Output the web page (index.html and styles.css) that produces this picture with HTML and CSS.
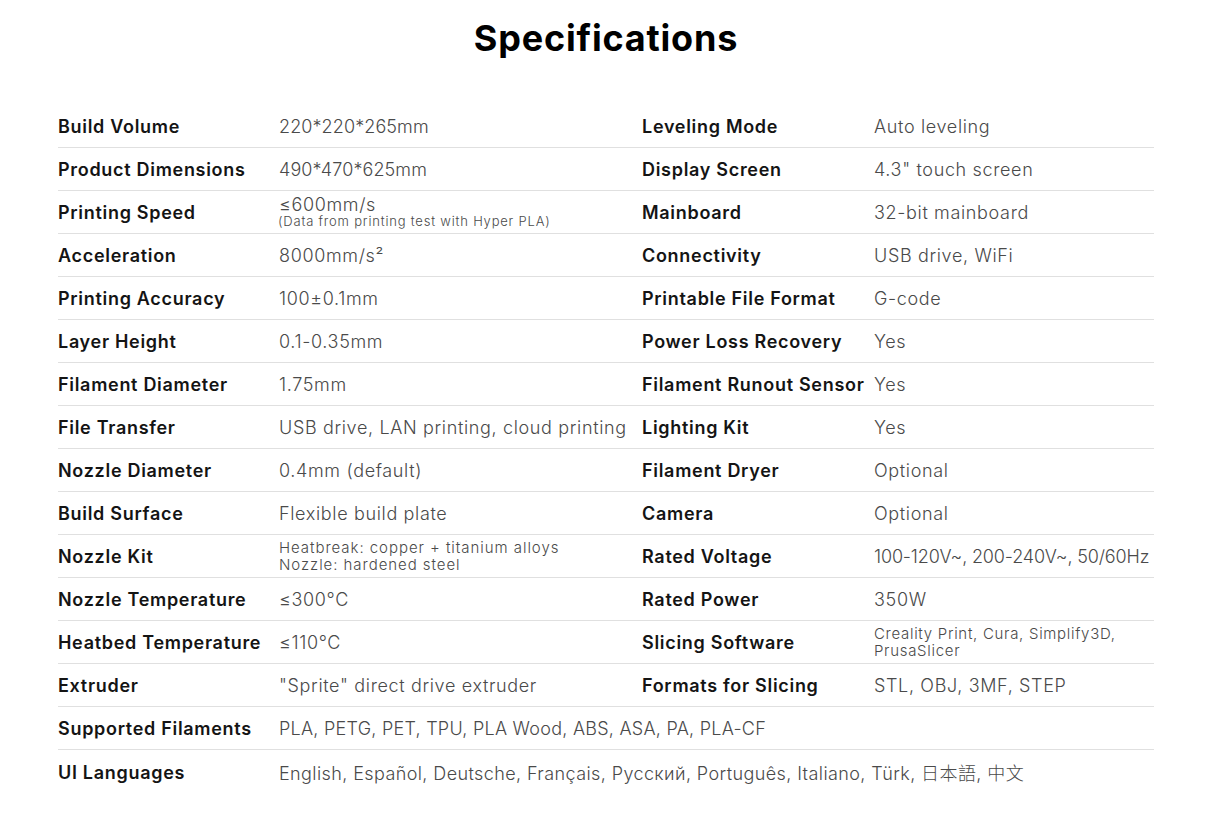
FILE: index.html
```html
<!DOCTYPE html>
<html lang="en">
<head>
<meta charset="utf-8">
<title>Specifications</title>
<link rel="stylesheet" href="styles.css">
</head>
<body>
<main class="specs">
  <h1 class="title">Specifications</h1>
  <div class="grid">
    <div class="cell label">Build Volume</div><div class="cell value num">220*220*265mm</div>
    <div class="cell label">Leveling Mode</div><div class="cell value">Auto leveling</div>

    <div class="cell label">Product Dimensions</div><div class="cell value num">490*470*625mm</div>
    <div class="cell label">Display Screen</div><div class="cell value">4.3" touch screen</div>

    <div class="cell label">Printing Speed</div><div class="cell value stack"><span class="main">≤600mm/s</span><span class="note">(Data from printing test with Hyper PLA)</span></div>
    <div class="cell label">Mainboard</div><div class="cell value">32-bit mainboard</div>

    <div class="cell label">Acceleration</div><div class="cell value">8000mm/s²</div>
    <div class="cell label">Connectivity</div><div class="cell value">USB drive, WiFi</div>

    <div class="cell label">Printing Accuracy</div><div class="cell value">100±0.1mm</div>
    <div class="cell label">Printable File Format</div><div class="cell value">G-code</div>

    <div class="cell label">Layer Height</div><div class="cell value">0.1-0.35mm</div>
    <div class="cell label">Power Loss Recovery</div><div class="cell value">Yes</div>

    <div class="cell label">Filament Diameter</div><div class="cell value">1.75mm</div>
    <div class="cell label">Filament Runout Sensor</div><div class="cell value">Yes</div>

    <div class="cell label">File Transfer</div><div class="cell value">USB drive, LAN printing, cloud printing</div>
    <div class="cell label">Lighting Kit</div><div class="cell value">Yes</div>

    <div class="cell label">Nozzle Diameter</div><div class="cell value">0.4mm (default)</div>
    <div class="cell label">Filament Dryer</div><div class="cell value">Optional</div>

    <div class="cell label">Build Surface</div><div class="cell value">Flexible build plate</div>
    <div class="cell label">Camera</div><div class="cell value">Optional</div>

    <div class="cell label">Nozzle Kit</div><div class="cell value kit">Heatbreak: copper + titanium alloys<br>Nozzle: hardened steel</div>
    <div class="cell label">Rated Voltage</div><div class="cell value voltage">100-120V~, 200-240V~, 50/60Hz</div>

    <div class="cell label">Nozzle Temperature</div><div class="cell value">≤300°C</div>
    <div class="cell label">Rated Power</div><div class="cell value">350W</div>

    <div class="cell label">Heatbed Temperature</div><div class="cell value">≤110°C</div>
    <div class="cell label">Slicing Software</div><div class="cell value slicer">Creality Print, Cura, Simplify3D,<br>PrusaSlicer</div>

    <div class="cell label">Extruder</div><div class="cell value">"Sprite" direct drive extruder</div>
    <div class="cell label">Formats for Slicing</div><div class="cell value">STL, OBJ, 3MF, STEP</div>

    <div class="cell label">Supported Filaments</div><div class="cell value wide filaments">PLA, PETG, PET, TPU, PLA Wood, ABS, ASA, PA, PLA-CF</div>

    <div class="cell label last">UI Languages</div><div class="cell value wide languages last">English, Español, Deutsche, Français, Русский, Português, Italiano, Türk, 日本語, 中文</div>
  </div>
</main>
</body>
</html>
```

FILE: styles.css
```css
html, body {
  margin: 0;
  padding: 0;
  background: #ffffff;
}

body {
  font-family: "Inter", "Open Sans", "Noto Sans CJK SC", sans-serif;
  color: #111111;
}

.specs {
  width: 1096px;
  margin-left: 58px;
}

.title {
  margin: 0 0 45px 0;
  padding-top: 16px;
  height: 44px;
  line-height: 44px;
  font-size: 36px;
  font-weight: 700;
  letter-spacing: 0.8px;
  text-align: center;
  color: #000000;
}

.grid {
  display: grid;
  grid-template-columns: 221px 363px 232px 280px;
}

.cell {
  border-bottom: 1px solid #e0e0e0;
  display: flex;
  align-items: center;
  box-sizing: border-box;
  height: 43px;
  white-space: nowrap;
}

.cell.last {
  border-bottom: none;
}

.label {
  font-size: 18px;
  font-weight: 600;
  letter-spacing: 0.7px;
  color: #141414;
  padding-top: 1px;
}

.value {
  font-size: 18px;
  font-weight: 300;
  letter-spacing: 0.65px;
  color: #4a4a4a;
}

.value.num {
  letter-spacing: 0.1px;
}

.value.voltage {
  letter-spacing: -0.15px;
}

.value.wide {
  grid-column: span 3;
}

.value.filaments {
  letter-spacing: 0.25px;
}

.value.languages {
  letter-spacing: 0.4px;
}

.stack {
  flex-direction: column;
  align-items: flex-start;
  justify-content: center;
}

.stack .main {
  line-height: 19px;
}

.note {
  font-size: 13px;
  line-height: 15px;
  letter-spacing: 0.8px;
  margin-left: -1px;
}

.kit {
  font-size: 15px;
  line-height: 17px;
  letter-spacing: 0.95px;
}

.slicer {
  font-size: 15px;
  line-height: 17px;
  letter-spacing: 0.7px;
}
```
